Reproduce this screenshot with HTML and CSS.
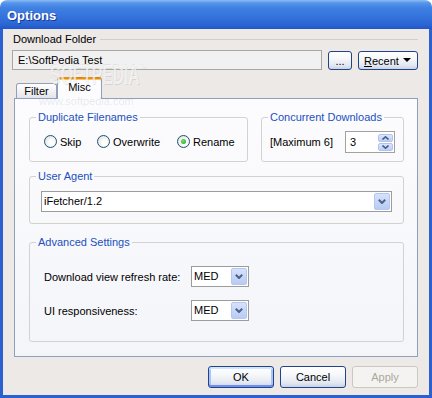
FILE: index.html
```html
<!DOCTYPE html>
<html lang="en">
<head>
    <meta charset="UTF-8">
    <meta name="viewport" content="width=device-width, initial-scale=1.0">
    <title>Options</title>
    <link rel="stylesheet" href="styles.css">
</head>
<body>
    <div class="window">
        <div class="titlebar"><span class="title">Options</span></div>
        <div class="frame">
            <div class="folder-head">
                <span>Download Folder</span>
                <div class="rule"></div>
            </div>
            <div class="folder-row">
                <div class="textbox">E:\SoftPedia Test</div>
                <div class="btn btn-dots">...</div>
                <div class="btn btn-recent"><span><u>R</u>ecent</span><span class="caret"></span></div>
            </div>

            <div class="tabs">
                <div class="tab">Filter</div>
                <div class="tab active">Misc</div>
            </div>
            <div class="panel">
                <div class="group-row">
                    <fieldset class="dup">
                        <legend>Duplicate Filenames</legend>
                        <div class="radios">
                            <label class="radio"><span class="dot"></span>Skip</label>
                            <label class="radio"><span class="dot"></span>Overwrite</label>
                            <label class="radio"><span class="dot checked"></span>Rename</label>
                        </div>
                    </fieldset>
                    <fieldset class="conc">
                        <legend>Concurrent Downloads</legend>
                        <div class="spin-row">
                            <span>[Maximum 6]</span>
                            <div class="spin">
                                <span class="spin-val">3</span>
                                <div class="spin-btns">
                                    <span class="spin-btn"><svg width="7" height="4" viewBox="0 0 7 4"><polyline points="0.5,3.5 3.5,0.8 6.5,3.5" fill="none" stroke="#4d6185" stroke-width="1.6"/></svg></span>
                                    <span class="spin-btn"><svg width="7" height="4" viewBox="0 0 7 4"><polyline points="0.5,0.5 3.5,3.2 6.5,0.5" fill="none" stroke="#4d6185" stroke-width="1.6"/></svg></span>
                                </div>
                            </div>
                        </div>
                    </fieldset>
                </div>

                <fieldset class="agent">
                    <legend>User Agent</legend>
                    <div class="agent-body">
                        <div class="combo">
                            <span class="combo-val">iFetcher/1.2</span>
                            <span class="drop"><svg width="8" height="5" viewBox="0 0 8 5"><polyline points="0.8,0.8 4,4 7.2,0.8" fill="none" stroke="#4d6185" stroke-width="2"/></svg></span>
                        </div>
                    </div>
                </fieldset>

                <fieldset class="advanced">
                    <legend>Advanced Settings</legend>
                    <div class="settings">
                        <span>Download view refresh rate:</span>
                        <div class="combo small">
                            <span class="combo-val">MED</span>
                            <span class="drop"><svg width="8" height="5" viewBox="0 0 8 5"><polyline points="0.8,0.8 4,4 7.2,0.8" fill="none" stroke="#4d6185" stroke-width="2"/></svg></span>
                        </div>
                        <span>UI responsiveness:</span>
                        <div class="combo small">
                            <span class="combo-val">MED</span>
                            <span class="drop"><svg width="8" height="5" viewBox="0 0 8 5"><polyline points="0.8,0.8 4,4 7.2,0.8" fill="none" stroke="#4d6185" stroke-width="2"/></svg></span>
                        </div>
                    </div>
                </fieldset>
            </div>

            <div class="footer">
                <div class="btn btn-default">OK</div>
                <div class="btn">Cancel</div>
                <div class="btn disabled">Apply</div>
            </div>

            <div class="watermark">SOFTPEDIA<sup>™</sup></div>
            <div class="watermark-url">www.softpedia.com</div>
        </div>
    </div>
</body>
</html>
```

FILE: styles.css
```css
* {
    box-sizing: border-box;
}
body {
    margin: 0;
    font-family: "Liberation Sans", Arial, sans-serif;
    font-size: 11px;
    color: #000;
    background: #fff;
}
.window {
    width: 432px;
    height: 398px;
    display: flex;
    flex-direction: column;
}
.titlebar {
    height: 29px;
    flex: none;
    display: flex;
    align-items: center;
    padding: 2px 0 0 7px;
    border-radius: 7px 7px 0 0;
    background: linear-gradient(#8cbcf4 0, #5595ea 3px, #3f80e2 8px, #3473dc 17px, #2a64d3 25px, #2256c8 29px);
}
.title {
    color: #fff;
    font-weight: bold;
    font-size: 13px;
    text-shadow: 1px 1px 0 #1a3a96;
}
.frame {
    flex: 1;
    position: relative;
    display: flex;
    flex-direction: column;
    padding: 3px 11px 0 9px;
    background: #ece9e7;
    border: 3px solid #2c5fd0;
    border-top: none;
}

/* download folder */
.folder-head {
    display: flex;
    align-items: center;
    height: 14px;
    margin-left: 1px;
}
.rule {
    flex: 1;
    margin-left: 4px;
    border-top: 1px solid #d0d0ca;
}
.folder-row {
    display: flex;
    align-items: flex-start;
    height: 20px;
    margin-top: 4px;
}
.textbox {
    flex: 1;
    height: 20px;
    line-height: 18px;
    padding-left: 5px;
    border: 1px solid #a7a7a7;
    background: #f1f1f1;
}
.btn {
    display: flex;
    align-items: center;
    justify-content: center;
    height: 22px;
    width: 66px;
    border: 1px solid #22428a;
    border-radius: 3px;
    background: linear-gradient(#ffffff, #f6f7fa 40%, #e2e7f0 80%, #c9d2e4);
}
.btn-dots {
    width: 24px;
    height: 19px;
    margin: 1px 0 0 6px;
    padding-bottom: 2px;
    align-items: flex-end;
}
.btn-recent {
    width: 60px;
    height: 19px;
    margin: 1px 0 0 6px;
    justify-content: space-between;
    padding: 0 6px 0 5px;
}
.caret {
    width: 0;
    height: 0;
    border-left: 4px solid transparent;
    border-right: 4px solid transparent;
    border-top: 4px solid #000;
    margin-bottom: 2px;
}
.btn-default {
    box-shadow: inset 0 2px 0 #cee7ff, inset 0 -2px 0 #6f8ff0, inset 2px 0 0 #a9c5f7, inset -2px 0 0 #a9c5f7;
}
.btn.disabled {
    color: #aca899;
    border-color: #cbc9bf;
    background: #f4f3f2;
}

/* tabs */
.tabs {
    display: flex;
    align-items: flex-end;
    height: 21px;
    margin-top: 7px;
    padding-left: 4px;
    position: relative;
    z-index: 1;
}
.tab {
    width: 41px;
    height: 15px;
    line-height: 14px;
    text-align: center;
    border: 1px solid #8fa0bd;
    border-bottom: none;
    border-radius: 3px 3px 0 0;
    background: linear-gradient(#ffffff, #f0f0f2 60%, #e2e4ea);
}
.tab.active {
    width: 45px;
    height: 22px;
    line-height: 16px;
    margin-bottom: -1px;
    border-top: 2px solid #e68b2c;
    box-shadow: inset 0 1px 0 #ffc73c;
    background: #fcfcfe;
}
.panel {
    height: 259px;
    margin-left: 2px;
    padding: 12px 13px 0 14px;
    border: 1px solid #8fa0bd;
    background: linear-gradient(#fcfcfe, #f4f5f9);
}

/* group boxes */
fieldset {
    margin: 0;
    padding: 0;
    min-width: 0;
    border: 1px solid #d2d2cf;
    border-radius: 3px;
}
legend {
    margin-left: 6px;
    padding: 0 2px;
    line-height: 13px;
    color: #2150bd;
}
.group-row {
    display: flex;
    gap: 13px;
}
.dup {
    width: 219px;
}
.conc {
    flex: 1;
}
.radios {
    display: grid;
    grid-template-columns: 53px 80px auto;
    height: 13px;
    margin: 11px 0 13px 14px;
}
.radio {
    display: flex;
    align-items: center;
    gap: 3px;
}
.dot {
    width: 13px;
    height: 13px;
    border: 1px solid #1c5180;
    border-radius: 50%;
    display: flex;
    align-items: center;
    justify-content: center;
    background: radial-gradient(circle at 60% 60%, #ffffff 20%, #f0f0ea 55%, #d2d2cc);
}
.dot.checked::after {
    content: "";
    width: 5px;
    height: 5px;
    border-radius: 50%;
    background: radial-gradient(circle at 40% 40%, #6de36d, #21a121);
}
.spin-row {
    display: flex;
    align-items: center;
    justify-content: space-between;
    height: 22px;
    margin: 7px 8px 8px 8px;
}
.spin {
    display: flex;
    width: 50px;
    height: 22px;
    border: 1px solid #a2a2a2;
    background: #fff;
    padding: 1px 1px 1px 4px;
}
.spin-val {
    flex: 1;
    line-height: 18px;
}
.spin-btns {
    display: flex;
    flex-direction: column;
    gap: 1px;
    width: 15px;
    padding-top: 1px;
}
.spin-btn {
    height: 9px;
    display: flex;
    align-items: center;
    justify-content: center;
    border: 1px solid #b3c4ea;
    border-radius: 2px;
    background: linear-gradient(#dbe6fd, #bccff7);
}
.agent {
    margin-top: 8px;
}
.agent-body {
    padding: 8px 11px 11px 11px;
}
.combo {
    display: flex;
    height: 21px;
    border: 1px solid #9c9c9c;
    background: #fff;
    padding: 1px;
}
.combo-val {
    flex: 1;
    line-height: 17px;
    padding-left: 1px;
}
.drop {
    width: 16px;
    display: flex;
    align-items: center;
    justify-content: center;
    border: 1px solid #b5c7ee;
    border-radius: 2px;
    background: linear-gradient(#d6e2fc, #b8cbf4);
}
.advanced {
    margin-top: 12px;
}
.settings {
    display: grid;
    grid-template-columns: 147px 58px;
    grid-auto-rows: 21px;
    row-gap: 13px;
    align-items: center;
    padding: 17px 0 20px 14px;
}
.combo.small {
    height: 21px;
}

/* bottom buttons */
.footer {
    display: flex;
    justify-content: flex-end;
    gap: 6px;
    margin-top: 9px;
}

/* faint site watermark */
.watermark {
    position: absolute;
    left: 47px;
    top: 35px;
    line-height: 22px;
    font-weight: bold;
    font-size: 27px;
    transform: scaleX(0.58);
    transform-origin: left top;
    color: rgba(255, 255, 255, 0.7);
    text-shadow: 1px 1px 0 rgba(0, 0, 0, 0.1), -1px -1px 0 rgba(0, 0, 0, 0.06);
    z-index: 2;
    pointer-events: none;
}
.watermark sup {
    font-size: 10px;
    vertical-align: top;
    line-height: 10px;
}
.watermark-url {
    position: absolute;
    left: 36px;
    top: 68px;
    line-height: 8px;
    font-size: 11px;
    color: rgba(120, 120, 140, 0.16);
    z-index: 2;
    pointer-events: none;
}
```
